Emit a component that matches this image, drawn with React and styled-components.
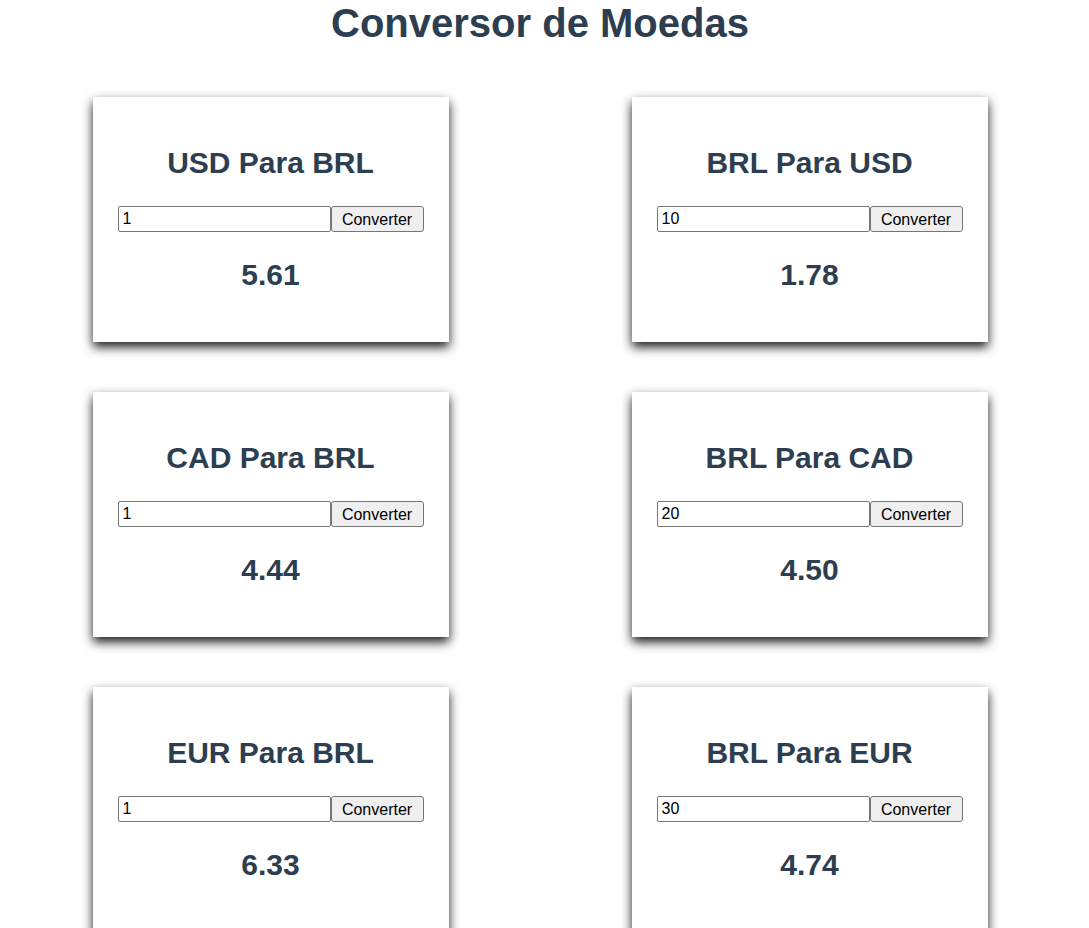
import React, { useState } from "react";
import styled, { createGlobalStyle } from "styled-components";

const GlobalStyle = createGlobalStyle`
  body {
    margin: 0;
    background: #ffffff;
    font-family: "Liberation Sans", Arial, sans-serif;
  }
`;

const Page = styled.div`
  width: 1080px;
  color: #2c3e50;
`;

const Title = styled.h1`
  margin: 0;
  font-size: 40px;
  line-height: 46px;
  font-weight: 700;
  text-align: center;
`;

const Grid = styled.div`
  display: grid;
  grid-template-columns: repeat(2, 356px);
  justify-content: center;
  column-gap: 183px;
  row-gap: 50px;
  padding: 51px 0 40px;
`;

const Card = styled.div`
  display: flex;
  flex-direction: column;
  align-items: center;
  height: 245px;
  box-sizing: border-box;
  padding-top: 49px;
  background: #ffffff;
  box-shadow: 0 5px 10px rgba(0, 0, 0, 0.9);
`;

const CardTitle = styled.h2`
  margin: 0 0 26px;
  font-size: 30px;
  line-height: 34px;
  font-weight: 700;
`;

const Form = styled.form`
  display: flex;
`;

const Input = styled.input`
  width: 213px;
  height: 26px;
  box-sizing: border-box;
  padding: 0 4px;
  border: 1px solid #767676;
  border-radius: 2px;
  font-family: "Liberation Sans", Arial, sans-serif;
  font-size: 16px;
  color: #000000;
  outline: none;
`;

const Button = styled.button`
  width: 93px;
  height: 26px;
  box-sizing: border-box;
  padding: 1px 0 0;
  border: 1px solid #767676;
  border-radius: 3px;
  background: #efefef;
  font-family: "Liberation Sans", Arial, sans-serif;
  font-size: 16px;
  color: #000000;
  cursor: pointer;
`;

const Result = styled.div`
  margin-top: 26px;
  font-size: 30px;
  line-height: 34px;
  font-weight: 700;
`;

const converters = [
  { from: "USD", to: "BRL", value: "1", result: "5.61" },
  { from: "BRL", to: "USD", value: "10", result: "1.78" },
  { from: "CAD", to: "BRL", value: "1", result: "4.44" },
  { from: "BRL", to: "CAD", value: "20", result: "4.50" },
  { from: "EUR", to: "BRL", value: "1", result: "6.33" },
  { from: "BRL", to: "EUR", value: "30", result: "4.74" },
];

function Converter({ from, to, value, result }) {
  const [amount, setAmount] = useState(value);

  return (
    <Card>
      <CardTitle>
        {from} Para {to}
      </CardTitle>
      <Form onSubmit={e => e.preventDefault()}>
        <Input value={amount} onChange={e => setAmount(e.target.value)} />
        <Button type="submit">Converter</Button>
      </Form>
      <Result>{result}</Result>
    </Card>
  );
}

export default function App() {
  return (
    <Page>
      <GlobalStyle />
      <Title>Conversor de Moedas</Title>
      <Grid>
        {converters.map(c => (
          <Converter key={c.from + c.to} {...c} />
        ))}
      </Grid>
    </Page>
  );
}
